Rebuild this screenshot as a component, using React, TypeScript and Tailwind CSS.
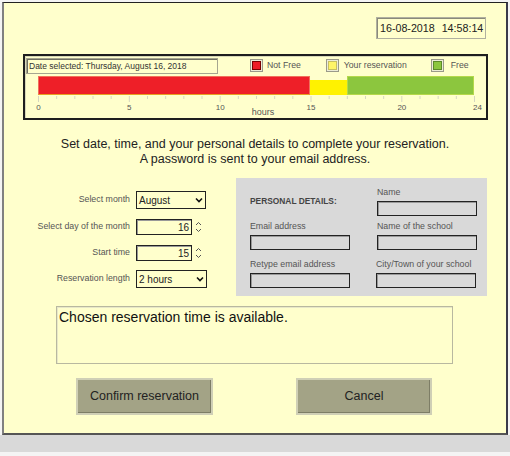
import React from "react";

const hours = Array.from({ length: 25 }, (_, i) => i);

function LegendBox({ color, border }: { color: string; border: string }) {
  return (
    <div className="w-[13px] h-[13px] border border-[#9a9a8a] bg-[#ececd8] p-[1px]">
      <div className="w-full h-full border" style={{ background: color, borderColor: border }} />
    </div>
  );
}

function Spinner() {
  return (
    <div className="flex flex-col items-center justify-center ml-[3px] leading-none">
      <svg width="7" height="5" viewBox="0 0 7 5">
        <path d="M1 4 L3.5 1.5 L6 4" fill="none" stroke="#555" strokeWidth="1" />
      </svg>
      <svg width="7" height="5" viewBox="0 0 7 5" className="mt-[2px]">
        <path d="M1 1 L3.5 3.5 L6 1" fill="none" stroke="#555" strokeWidth="1" />
      </svg>
    </div>
  );
}

function Chevron() {
  return (
    <svg width="8" height="6" viewBox="0 0 8 6">
      <path d="M1 1.5 L4 4.5 L7 1.5" fill="none" stroke="#111" strokeWidth="1.6" />
    </svg>
  );
}

function Field({ label, className }: { label: string; className?: string }) {
  return (
    <div className={className}>
      <div className="text-[8.8px] text-[#555] leading-[10px] whitespace-nowrap">{label}</div>
      <div className="mt-[4px] w-[100px] h-[15px] border border-[#222] shadow-[inset_1px_1px_0_#999]" />
    </div>
  );
}

export default function App() {
  return (
    <div className="w-[510px] h-[456px] bg-[#f4f4f4] font-['Liberation_Sans',Arial,sans-serif] overflow-hidden">
      <div className="ml-[2px] mt-[2px] w-[506px] h-[433px] bg-[#ffffcc] border-t border-t-[#222] border-l-2 border-l-[#808080] border-r-2 border-r-[#3a3a4a] border-b-2 border-b-[#555]">
        {/* clock */}
        <div className="flex justify-end pr-[20px] pt-[14px]">
          <div className="w-[110px] h-[22px] border border-[#b0b0a0] shadow-[inset_1px_1px_0_#8a8a7a] flex items-center gap-[7px] pl-[3px] text-[10.7px] text-[#222] whitespace-nowrap">
            <span>16-08-2018</span>
            <span>14:58:14</span>
          </div>
        </div>

        {/* availability chart */}
        <div className="ml-[19px] mt-[15px] w-[465px] h-[66px] border-2 border-[#1e1e1e] shadow-[inset_1px_1px_0_#d8d8b8]">
          <div className="flex items-center h-[20px]">
            <div className="ml-[1px] w-[192px] h-[16px] border border-[#a6a690] shadow-[inset_1px_1px_0_#6e6e60] flex items-center pl-[2px] text-[8.5px] text-[#333] whitespace-nowrap">
              Date selected: Thursday, August 16, 2018
            </div>
            <div className="ml-[32px] flex items-center gap-[4px]">
              <LegendBox color="#ee1c25" border="#7a0000" />
              <span className="text-[8.7px] text-[#555]">Not Free</span>
            </div>
            <div className="ml-[25px] flex items-center gap-[5px]">
              <LegendBox color="#fff568" border="#c8c060" />
              <span className="text-[8.7px] text-[#555]">Your reservation</span>
            </div>
            <div className="ml-[24px] flex items-center gap-[7px]">
              <LegendBox color="#8cc63e" border="#5c8a2a" />
              <span className="text-[8.7px] text-[#555]">Free</span>
            </div>
          </div>
          <div className="ml-[13px] w-[436px] h-[19px] flex items-end">
            <div className="w-[272px] h-full bg-[#ee1f28] border border-[#f0705a] border-b-[#e8a020]" />
            <div className="w-[37px] h-[15px] bg-[#fff200]" />
            <div className="flex-1 h-full bg-[#8cc63e] border border-[#b4d84a]" />
          </div>
          <svg width="461" height="23" className="block">
            {hours.map((h) => {
              const x = 13.5 + (h * 436) / 24;
              const major = h % 5 === 0 || h === 24;
              return (
                <line key={h} x1={x} x2={x} y1={1} y2={major ? 7 : 4} stroke="#d6d6c0" strokeWidth="1" />
              );
            })}
            {[0, 5, 10, 15, 20, 24].map((h) => (
              <text key={h} x={13.5 + (h * 436) / 24 + (h === 24 ? 3 : 0)} y={15} fontSize="8" fill="#555" textAnchor="middle" fontFamily="Liberation Sans, Arial, sans-serif">
                {h}
              </text>
            ))}
            <text x={238} y={20} fontSize="9" fill="#555" textAnchor="middle" fontFamily="Liberation Sans, Arial, sans-serif">
              hours
            </text>
          </svg>
        </div>

        {/* instructions */}
        <div className="mt-[17px] text-center text-[12.5px] leading-[15px] text-[#222]">
          <p>Set date, time, and your personal details to complete your reservation.</p>
          <p>A password is sent to your email address.</p>
        </div>

        {/* form */}
        <div className="mt-[11px] flex">
          <div className="w-[232px] pt-[13px]">
            <div className="flex items-center h-[18px]">
              <div className="w-[132px] text-right pr-[6px] text-[8.8px] text-[#555]">Select month</div>
              <div className="w-[70px] h-[18px] border border-[#222] flex items-center justify-between px-[2px] text-[10px] text-[#222]">
                August
                <Chevron />
              </div>
            </div>
            <div className="flex items-center h-[16px] mt-[10px]">
              <div className="w-[132px] text-right pr-[6px] text-[8.8px] text-[#555]">Select day of the month</div>
              <div className="w-[56px] h-[16px] border border-[#222] shadow-[inset_1px_1px_0_#999] flex items-center justify-end pr-[2px] text-[10px] text-[#222]">
                16
              </div>
              <Spinner />
            </div>
            <div className="flex items-center h-[16px] mt-[10px]">
              <div className="w-[132px] text-right pr-[6px] text-[8.8px] text-[#555]">Start time</div>
              <div className="w-[56px] h-[16px] border border-[#222] shadow-[inset_1px_1px_0_#999] flex items-center justify-end pr-[2px] text-[10px] text-[#222]">
                15
              </div>
              <Spinner />
            </div>
            <div className="flex items-center h-[18px] mt-[9px]">
              <div className="w-[132px] text-right pr-[6px] text-[8.8px] text-[#555]">Reservation length</div>
              <div className="w-[71px] h-[18px] border border-[#222] flex items-center justify-between px-[2px] text-[10px] text-[#222]">
                2 hours
                <Chevron />
              </div>
            </div>
          </div>

          <div className="w-[251px] h-[118px] bg-[#d9d9d9] grid grid-cols-[127px_1fr] content-start pl-[14px] pt-[9px]">
            <div className="pt-[8px] text-[8.4px] font-bold text-[#444] whitespace-nowrap">PERSONAL DETAILS:</div>
            <Field label="Name" />
            <Field label="Email address" className="mt-[5px]" />
            <Field label="Name of the school" className="mt-[5px]" />
            <Field label="Retype email address" className="mt-[9px]" />
            <Field label="City/Town of your school" className="mt-[9px] -ml-[1px]" />
          </div>
        </div>

        {/* status message */}
        <div className="ml-[52px] mt-[10px] w-[397px] h-[58px] border border-[#b8b8a0] shadow-[inset_1px_1px_0_#e8e8c8] px-[2px] pt-[1px] text-[14px] leading-[18px] text-[#111]">
          Chosen reservation time is available.
        </div>

        {/* buttons */}
        <div className="mt-[14px] flex">
          <button className="ml-[72px] w-[137px] h-[37px] bg-[#a3a386] border-2 border-[#cfcfb6] shadow-[inset_-1px_-1px_0_#7d7d66] text-[12.5px] text-[#222]">
            Confirm reservation
          </button>
          <button className="ml-[83px] w-[136px] h-[37px] bg-[#a3a386] border-2 border-[#cfcfb6] shadow-[inset_-1px_-1px_0_#7d7d66] text-[12.5px] text-[#222]">
            Cancel
          </button>
        </div>
      </div>
      <div className="h-[17px] bg-[#d9d9d9]" />
    </div>
  );
}
